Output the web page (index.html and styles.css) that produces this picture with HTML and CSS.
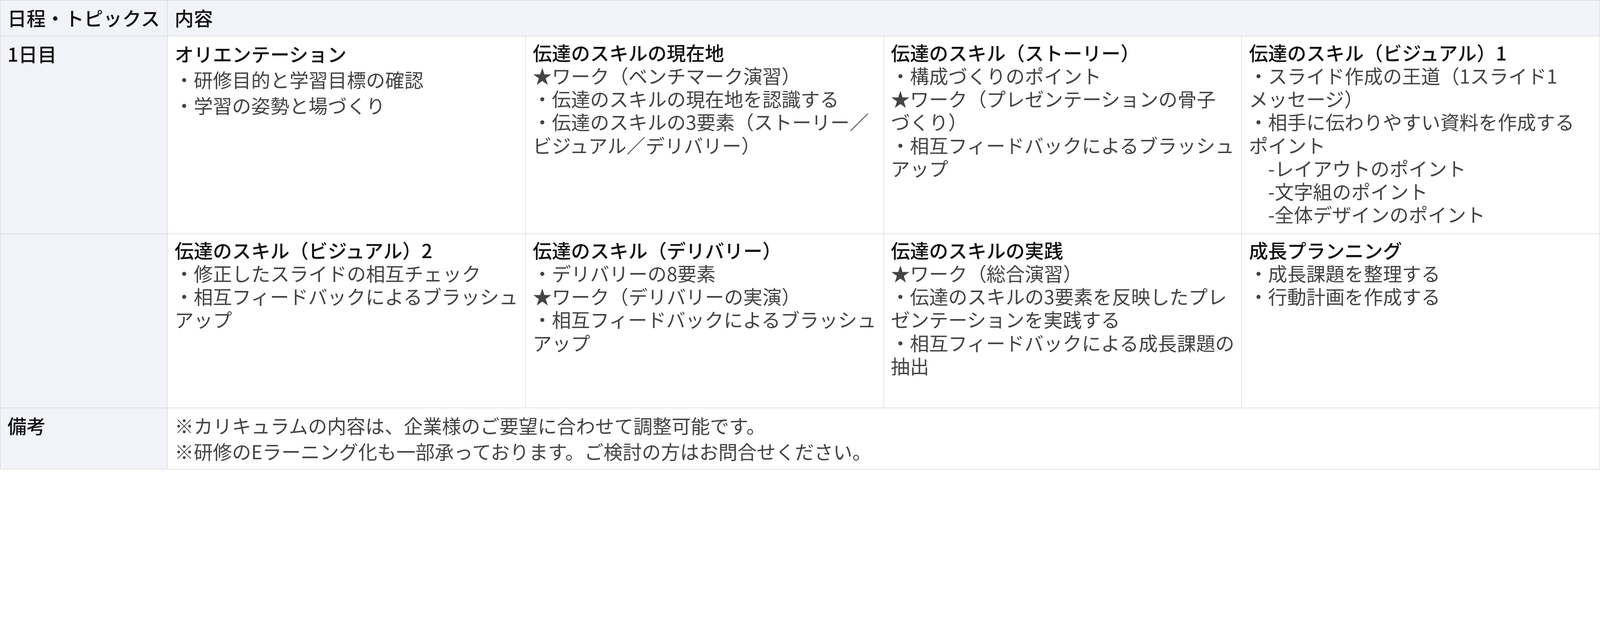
FILE: index.html
```html
<!DOCTYPE html>
<html lang="ja">
<head>
<meta charset="utf-8">
<title>カリキュラム</title>
<link rel="stylesheet" href="styles.css">
</head>
<body>
<table class="curriculum">
  <colgroup>
    <col class="col-label">
    <col><col><col><col>
  </colgroup>
  <tr class="row-head">
    <th class="label">日程・トピックス</th>
    <th class="label" colspan="4">内容</th>
  </tr>
  <tr class="row-day1">
    <th class="label">1日目</th>
    <td class="loose">
      <div class="ttl">オリエンテーション</div>
      <div>・研修目的と学習目標の確認</div>
      <div>・学習の姿勢と場づくり</div>
    </td>
    <td>
      <div class="ttl">伝達のスキルの現在地</div>
      <div>★ワーク（ベンチマーク演習）</div>
      <div>・伝達のスキルの現在地を認識する</div>
      <div>・伝達のスキルの3要素（ストーリー／</div>
      <div>ビジュアル／デリバリー）</div>
    </td>
    <td>
      <div class="ttl">伝達のスキル（ストーリー）</div>
      <div>・構成づくりのポイント</div>
      <div>★ワーク（プレゼンテーションの骨子</div>
      <div>づくり）</div>
      <div>・相互フィードバックによるブラッシュ</div>
      <div>アップ</div>
    </td>
    <td>
      <div class="ttl">伝達のスキル（ビジュアル）1</div>
      <div>・スライド作成の王道（1スライド1</div>
      <div>メッセージ）</div>
      <div>・相手に伝わりやすい資料を作成する</div>
      <div>ポイント</div>
      <div>　-レイアウトのポイント</div>
      <div>　-文字組のポイント</div>
      <div>　-全体デザインのポイント</div>
    </td>
  </tr>
  <tr class="row-day1b">
    <th class="label"></th>
    <td>
      <div class="ttl">伝達のスキル（ビジュアル）2</div>
      <div>・修正したスライドの相互チェック</div>
      <div>・相互フィードバックによるブラッシュ</div>
      <div>アップ</div>
    </td>
    <td>
      <div class="ttl">伝達のスキル（デリバリー）</div>
      <div>・デリバリーの8要素</div>
      <div>★ワーク（デリバリーの実演）</div>
      <div>・相互フィードバックによるブラッシュ</div>
      <div>アップ</div>
    </td>
    <td>
      <div class="ttl">伝達のスキルの実践</div>
      <div>★ワーク（総合演習）</div>
      <div>・伝達のスキルの3要素を反映したプレ</div>
      <div>ゼンテーションを実践する</div>
      <div>・相互フィードバックによる成長課題の</div>
      <div>抽出</div>
    </td>
    <td>
      <div class="ttl">成長プランニング</div>
      <div>・成長課題を整理する</div>
      <div>・行動計画を作成する</div>
    </td>
  </tr>
  <tr class="row-note">
    <th class="label">備考</th>
    <td class="loose" colspan="4">
      <div>※カリキュラムの内容は、企業様のご要望に合わせて調整可能です。</div>
      <div>※研修のEラーニング化も一部承っております。ご検討の方はお問合せください。</div>
    </td>
  </tr>
</table>
</body>
</html>
```

FILE: styles.css
```css
html, body {
  margin: 0;
  padding: 0;
  background: #ffffff;
}

body {
  font-family: "Noto Sans CJK JP", "Noto Sans", sans-serif;
  font-size: 49px;
  color: #444444;
}

.curriculum {
  width: 100%;
  border-collapse: collapse;
  table-layout: fixed;
  border: 1px solid #cccccc;
}

.col-label {
  width: 428px;
}

.curriculum th,
.curriculum td {
  border: 1px solid #cccccc;
  padding: 11px 18px;
  vertical-align: top;
  text-align: left;
  white-space: nowrap;
  line-height: 59.25px;
}

.curriculum th {
  font-weight: 500;
  color: #111111;
}

.curriculum th.label {
  background: #f1f3f9;
  line-height: 66px;
}

.curriculum td.loose {
  line-height: 66px;
}

.ttl {
  color: #111111;
  font-weight: 500;
}

.row-head { height: 91.5px; }
.row-day1 { height: 506px; }
.row-day1b { height: 446px; }
.row-note { height: 157px; }
```
